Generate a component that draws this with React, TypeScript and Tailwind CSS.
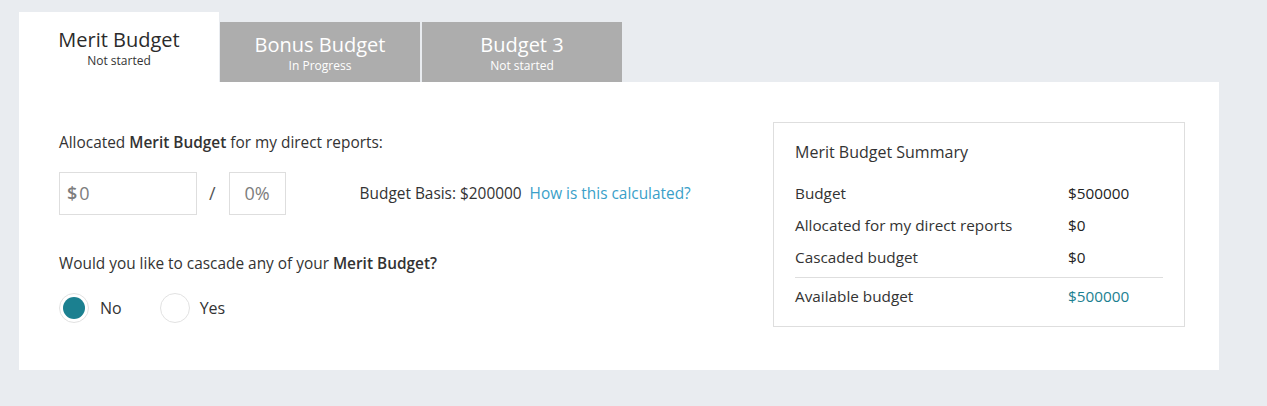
import { useState } from "react";

const tabs = [
  { title: "Merit Budget", status: "Not started" },
  { title: "Bonus Budget", status: "In Progress" },
  { title: "Budget 3", status: "Not started" },
];

const rows = [
  { label: "Budget", value: "$500000" },
  { label: "Allocated for my direct reports", value: "$0" },
  { label: "Cascaded budget", value: "$0" },
];

export default function App() {
  const [active, setActive] = useState(0);
  const [cascade, setCascade] = useState(false);

  return (
    <div className="min-h-[406px] bg-[#e9ecf0] pt-[12px] pl-[19px] font-['Open_Sans',sans-serif] text-[#333]">
      {/* 탭 */}
      <div className="flex items-end">
        {tabs.map((t, i) =>
          i === active ? (
            <button
              key={t.title}
              onClick={() => setActive(i)}
              className="flex h-[70px] w-[200px] flex-col items-center justify-center bg-white pt-[2px]"
            >
              <span className="text-[20px] leading-[26px] text-[#2b2b2b]">{t.title}</span>
              <span className="text-[12px] leading-[16px] text-[#333]">{t.status}</span>
            </button>
          ) : (
            <button
              key={t.title}
              onClick={() => setActive(i)}
              className={`flex h-[60px] w-[200px] flex-col items-center justify-center bg-[#adadad] pt-[1px] text-white ${
                i === 1 ? "ml-[1px]" : "ml-[2px]"
              }`}
            >
              <span className="text-[20px] leading-[26px]">{t.title}</span>
              <span className="text-[12px] leading-[16px]">{t.status}</span>
            </button>
          )
        )}
      </div>

      {/* 본문 패널 */}
      <div className="flex h-[288px] w-[1200px] justify-between bg-white pt-[40px] pr-[34px] pl-[40px]">
        <div className="pt-[10px]">
          <p className="text-[15.4px] leading-[22px]">
            Allocated <span className="font-semibold">Merit Budget</span> for my direct reports:
          </p>

          <div className="mt-[18px] flex items-center">
            <div className="flex h-[43px] w-[138px] items-center border border-[#dedede] px-[7px] text-[18px] text-[#7d7d7d]">
              <span className="font-semibold">$</span>
              <span className="ml-[2px]">0</span>
            </div>
            <span className="ml-[12px] text-[18px] text-[#555]">/</span>
            <div className="ml-[13px] flex h-[43px] w-[57px] items-center justify-center border border-[#dedede] text-[18px] text-[#7d7d7d]">
              0%
            </div>
            <span className="ml-[74px] text-[15.4px]">Budget Basis: $200000</span>
            <a href="#" className="ml-[8px] text-[15.4px] text-[#3a9fc9]">
              How is this calculated?
            </a>
          </div>

          <p className="mt-[38px] text-[15.4px] leading-[22px]">
            Would you like to cascade any of your <span className="font-semibold">Merit Budget?</span>
          </p>

          <div className="mt-[18px] flex items-center">
            <button onClick={() => setCascade(false)} className="flex items-center">
              <span className="flex h-[30px] w-[30px] items-center justify-center rounded-full border border-[#e2e2e2]">
                {!cascade && <span className="h-[22px] w-[22px] rounded-full bg-[#1b8090]" />}
              </span>
              <span className="ml-[11px] text-[16px]">No</span>
            </button>
            <button onClick={() => setCascade(true)} className="ml-[38px] flex items-center">
              <span className="flex h-[30px] w-[30px] items-center justify-center rounded-full border border-[#e2e2e2]">
                {cascade && <span className="h-[22px] w-[22px] rounded-full bg-[#1b8090]" />}
              </span>
              <span className="ml-[10px] text-[16px]">Yes</span>
            </button>
          </div>
        </div>

        {/* 요약 카드 */}
        <div className="h-[205px] w-[412px] border border-[#dedede] px-[21px] pt-[18px]">
          <p className="text-[16px] leading-[22px]">Merit Budget Summary</p>
          <div className="mt-[14px] flex flex-col">
            {rows.map((r) => (
              <div key={r.label} className="flex h-[32px] items-center text-[15.3px]">
                <span className="w-[273px]">{r.label}</span>
                <span className="text-[#222]">{r.value}</span>
              </div>
            ))}
          </div>
          <div className="mt-[4px] border-t border-[#dedede]" />
          <div className="flex h-[36px] items-center text-[15.3px]">
            <span className="w-[273px]">Available budget</span>
            <span className="text-[#1b8090]">$500000</span>
          </div>
        </div>
      </div>
    </div>
  );
}
